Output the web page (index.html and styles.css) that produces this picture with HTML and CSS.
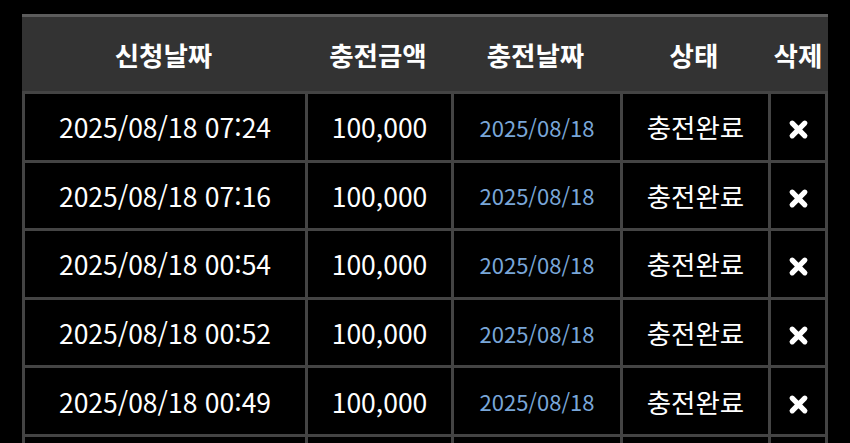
FILE: index.html
```html
<!DOCTYPE html>
<html lang="ko">
<head>
  <meta charset="UTF-8" />
  <meta name="viewport" content="width=device-width, initial-scale=1" />
  <title>충전내역</title>
  <link rel="stylesheet" href="styles.css">
</head>
<body>
  <div class="board">
    <div class="row head">
      <div class="cell">신청날짜</div>
      <div class="cell">충전금액</div>
      <div class="cell">충전날짜</div>
      <div class="cell">상태</div>
      <div class="cell">삭제</div>
    </div>

    <div class="row">
      <div class="cell">2025/08/18 07:24</div>
      <div class="cell">100,000</div>
      <div class="cell date">2025/08/18</div>
      <div class="cell">충전완료</div>
      <div class="cell"><svg class="del" viewBox="0 0 20 20"><path d="M4 4L16 16M16 4L4 16" /></svg></div>
    </div>
    <div class="row">
      <div class="cell">2025/08/18 07:16</div>
      <div class="cell">100,000</div>
      <div class="cell date">2025/08/18</div>
      <div class="cell">충전완료</div>
      <div class="cell"><svg class="del" viewBox="0 0 20 20"><path d="M4 4L16 16M16 4L4 16" /></svg></div>
    </div>
    <div class="row">
      <div class="cell">2025/08/18 00:54</div>
      <div class="cell">100,000</div>
      <div class="cell date">2025/08/18</div>
      <div class="cell">충전완료</div>
      <div class="cell"><svg class="del" viewBox="0 0 20 20"><path d="M4 4L16 16M16 4L4 16" /></svg></div>
    </div>
    <div class="row">
      <div class="cell">2025/08/18 00:52</div>
      <div class="cell">100,000</div>
      <div class="cell date">2025/08/18</div>
      <div class="cell">충전완료</div>
      <div class="cell"><svg class="del" viewBox="0 0 20 20"><path d="M4 4L16 16M16 4L4 16" /></svg></div>
    </div>
    <div class="row">
      <div class="cell">2025/08/18 00:49</div>
      <div class="cell">100,000</div>
      <div class="cell date">2025/08/18</div>
      <div class="cell">충전완료</div>
      <div class="cell"><svg class="del" viewBox="0 0 20 20"><path d="M4 4L16 16M16 4L4 16" /></svg></div>
    </div>
    <!-- next row starts below the fold -->
    <div class="row">
      <div class="cell"></div>
      <div class="cell"></div>
      <div class="cell"></div>
      <div class="cell"></div>
      <div class="cell"></div>
    </div>
  </div>
</body>
</html>
```

FILE: styles.css
```css
* {
  margin: 0;
  padding: 0;
  box-sizing: border-box;
}
body {
  height: 100vh;
  background: #000;
  font-family: "Noto Sans CJK KR", "Noto Sans", sans-serif;
  color: #fff;
  overflow: hidden;
}
.board {
  width: 806px;
  margin: 14px 0 0 22px;
}
.row {
  display: grid;
  grid-template-columns: 283px 146px 169px 148px 60px;
}
.cell {
  height: 68.6px;
  display: flex;
  align-items: center;
  justify-content: center;
  border-left: 3px solid #444;
  border-top: 3px solid #444;
  font-size: 26.5px;
  white-space: nowrap;
}
.cell:last-child {
  border-right: 3px solid #444;
}
.head {
  background: #333;
  border-top: 3px solid #5c5c5c;
}
.head .cell {
  height: 74px;
  border: none;
  font-size: 26.5px;
  font-weight: bold;
}
.date {
  color: #79a6d8;
  font-size: 22px;
}
.del {
  width: 21px;
  height: 21px;
  margin-top: 6px;
}
.del path {
  stroke: #fff;
  stroke-width: 5;
  stroke-linecap: round;
  fill: none;
}
```
